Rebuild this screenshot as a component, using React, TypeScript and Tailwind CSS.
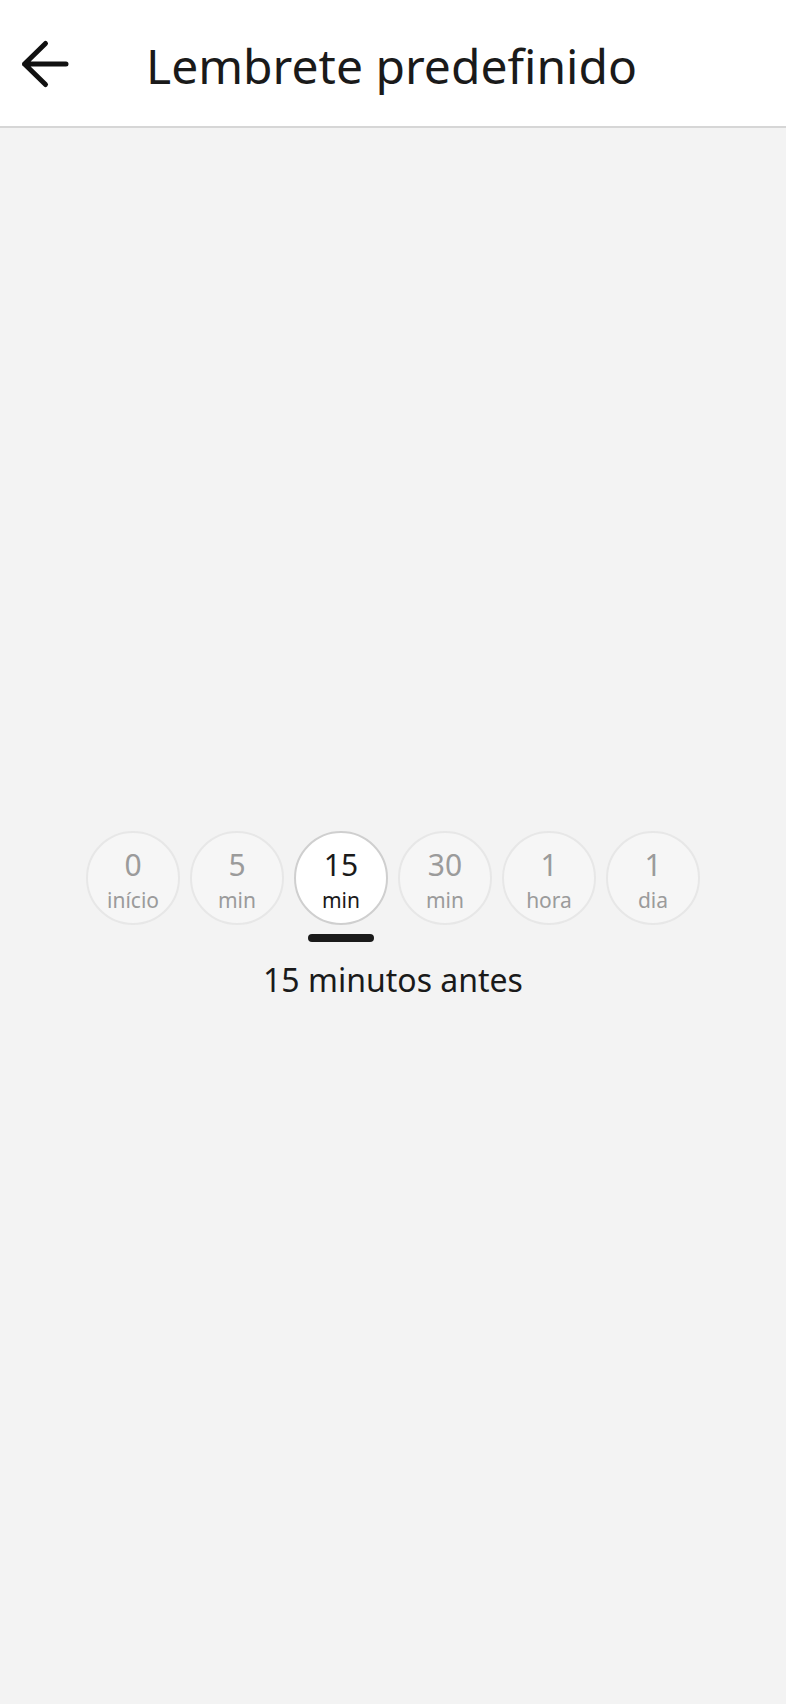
import React, { useState } from 'react';

interface ReminderOption {
  value: string;
  unit: string;
  description: string;
}

const options: ReminderOption[] = [
  { value: '0', unit: 'início', description: 'No início' },
  { value: '5', unit: 'min', description: '5 minutos antes' },
  { value: '15', unit: 'min', description: '15 minutos antes' },
  { value: '30', unit: 'min', description: '30 minutos antes' },
  { value: '1', unit: 'hora', description: '1 hora antes' },
  { value: '1', unit: 'dia', description: '1 dia antes' },
];

const BackArrow = () => (
  <svg width="50" height="50" viewBox="0 0 50 50" fill="none">
    <path
      d="M46 25H4.5M25.5 4.5L4.5 25L25.5 45.5"
      stroke="#111111"
      strokeWidth="5"
      strokeLinecap="round"
      strokeLinejoin="round"
    />
  </svg>
);

export default function App() {
  const [selected, setSelected] = useState(2);

  return (
    <div className="min-h-[1704px] w-full bg-[#f3f3f3] font-['Noto_Sans','Open_Sans',sans-serif]">
      {/* Header */}
      <header className="flex h-[128px] items-center border-b-2 border-[#d6d6d6] bg-white">
        <button className="ml-[20px] flex items-center pt-[2px]">
          <BackArrow />
        </button>
        <h1 className="ml-[76px] pt-[5px] text-[48px] leading-[64px] text-[#1a1a1a]">
          Lembrete predefinido
        </h1>
      </header>

      {/* Picker */}
      <div className="flex flex-col items-center pt-[703px]">
        <div className="flex gap-[10px]">
          {options.map((opt, i) => {
            const active = i === selected;
            return (
              <div key={i} className="flex flex-col items-center">
                <button
                  onClick={() => setSelected(i)}
                  className={`flex h-[94px] w-[94px] flex-col items-center justify-center rounded-full border-2 ${
                    active ? 'border-[#cfcfcf] bg-white' : 'border-[#e7e7e7] bg-[#f6f6f6]'
                  }`}
                >
                  <span
                    className={`text-[30px] leading-[44px] ${active ? 'text-[#1a1a1a]' : 'text-[#9b9b9b]'}`}
                  >
                    {opt.value}
                  </span>
                  <span
                    className={`text-[21px] leading-[27px] ${active ? 'text-[#1a1a1a]' : 'text-[#9b9b9b]'}`}
                  >
                    {opt.unit}
                  </span>
                </button>
                <div
                  className={`mt-[9px] h-[8px] w-[66px] rounded-full ${active ? 'bg-[#1a1a1a]' : 'bg-transparent'}`}
                />
              </div>
            );
          })}
        </div>
        <p className="mt-[18px] text-[32px] leading-[40px] text-[#1a1a1a]">
          {options[selected].description}
        </p>
      </div>
    </div>
  );
}
